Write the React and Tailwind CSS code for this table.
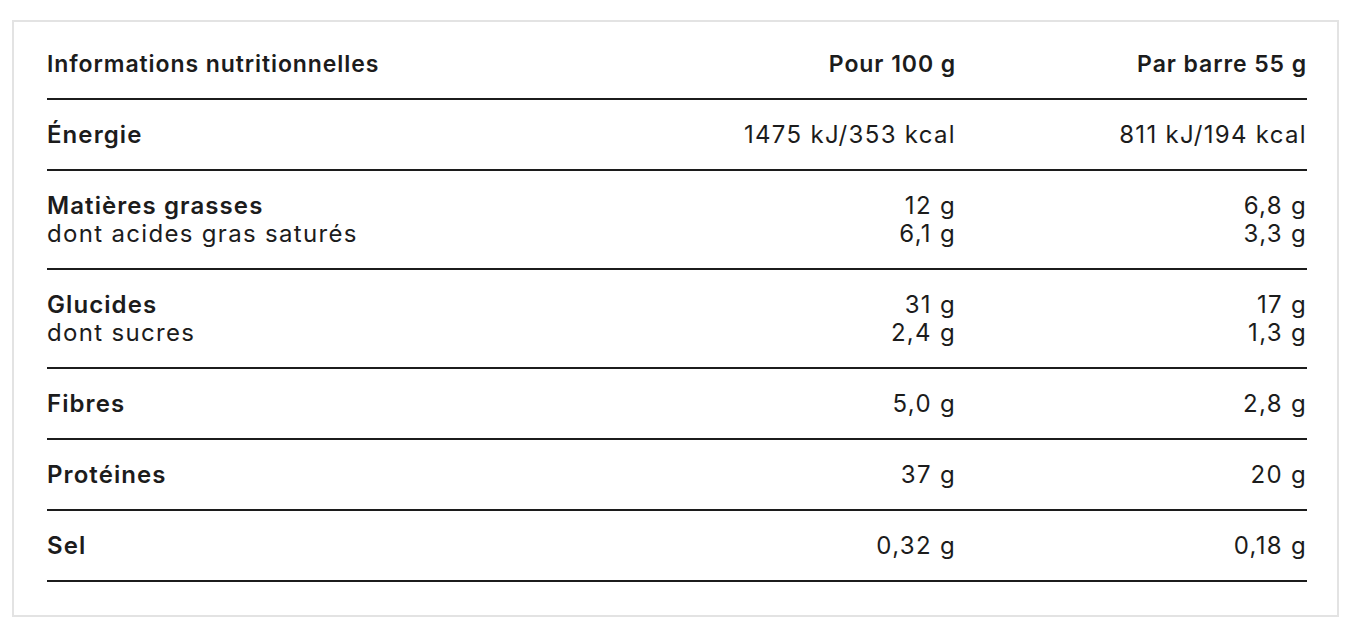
import React from 'react';

const rows = [
  { lines: [['Énergie', '1475 kJ/353 kcal', '811 kJ/194 kcal']] },
  {
    lines: [
      ['Matières grasses', '12 g', '6,8 g'],
      ['dont acides gras saturés', '6,1 g', '3,3 g'],
    ],
  },
  {
    lines: [
      ['Glucides', '31 g', '17 g'],
      ['dont sucres', '2,4 g', '1,3 g'],
    ],
  },
  { lines: [['Fibres', '5,0 g', '2,8 g']] },
  { lines: [['Protéines', '37 g', '20 g']] },
  { lines: [['Sel', '0,32 g', '0,18 g']] },
];

function Row({ lines }) {
  return (
    <div className="grid grid-cols-[1fr_351px_351px] border-b-2 border-[#1c1c1c] pt-[21px] pb-[20px]">
      <div>
        {lines.map((l, i) => (
          <div key={i} className={i === 0 ? 'font-semibold tracking-[0.045em]' : ''}>
            {l[0]}
          </div>
        ))}
      </div>
      <div className="text-right">
        {lines.map((l, i) => (
          <div key={i}>{l[1]}</div>
        ))}
      </div>
      <div className="text-right">
        {lines.map((l, i) => (
          <div key={i}>{l[2]}</div>
        ))}
      </div>
    </div>
  );
}

export default function App() {
  return (
    <div className="min-h-screen bg-white pt-[20px] pl-[12px]">
      <div
        className="w-[1327px] border-2 border-[#e3e3e3] pl-[33px] pr-[30px] pt-[8px] pb-[33px] text-[24px] leading-[28px] text-[#1c1c1c] tracking-[0.055em]"
        style={{ fontFamily: 'Inter, "Noto Sans", sans-serif' }}
      >
        <div className="grid grid-cols-[1fr_351px_351px] border-b-2 border-[#1c1c1c] py-[20px] text-[23px] font-semibold tracking-[0.04em]">
          <div>Informations nutritionnelles</div>
          <div className="text-right">Pour 100 g</div>
          <div className="text-right">Par barre 55 g</div>
        </div>
        {rows.map((r, i) => (
          <Row key={i} lines={r.lines} />
        ))}
      </div>
    </div>
  );
}
